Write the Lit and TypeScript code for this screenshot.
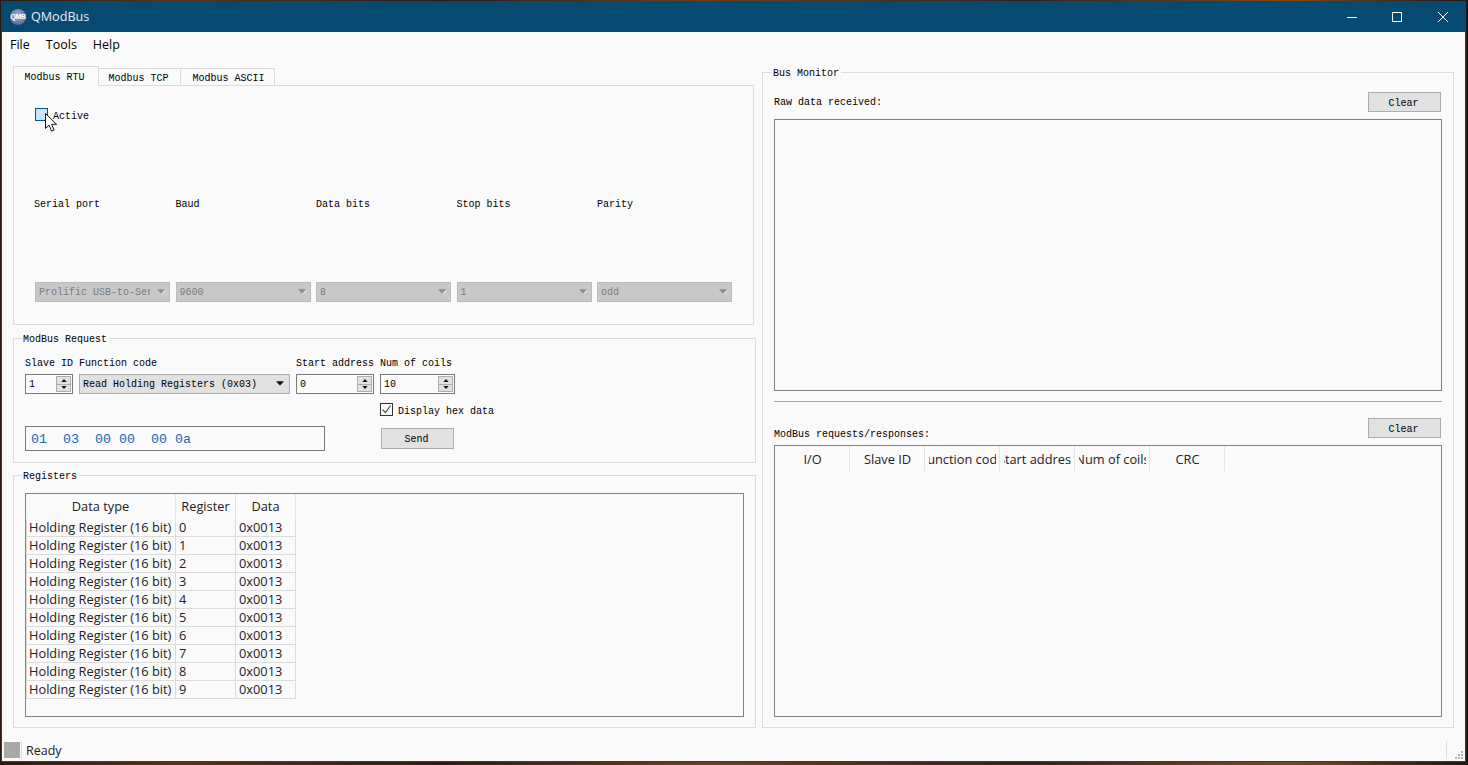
import { LitElement, html, svg, css } from "lit";
import { customElement } from "lit/decorators.js";

const arrow = (disabled: boolean) => html`<svg class="arrow" width="8" height="6" viewBox="0 0 9 6">
  ${disabled
    ? svg`<path d="M0 0h9L4.5 5z" fill="#8f8f8f"></path><path d="M4.5 5.6L9 1v1.4L4.5 6z" fill="#f4f4f4"></path>`
    : svg`<path d="M0 0h9L4.5 5z" fill="#111"></path>`}
</svg>`;

const spin = (value: string, width: number) => html`<div class="spin" style="width:${width}px">
  <span class="val">${value}</span>
  <div class="btns">
    <div class="sb"><svg width="6" height="3" viewBox="0 0 7 4"><path d="M3.5 0L7 4H0z" fill="#111"></path></svg></div>
    <div class="sb"><svg width="6" height="3" viewBox="0 0 7 4"><path d="M0 0h7L3.5 4z" fill="#111"></path></svg></div>
  </div>
</div>`;

@customElement("app-root")
export class AppRoot extends LitElement {
  static styles = css`
    :host {
      display: block;
      position: relative;
      width: 1468px;
      height: 765px;
      overflow: hidden;
      box-sizing: border-box;
      padding: 1px 2px 3px 1px;
      background: linear-gradient(90deg, #2a1a10, #5a3413 12%, #2b1d16 30%, #6b4016 48%, #33221a 70%, #7a4a18 88%, #1e1712);
      font-family: "Liberation Mono", monospace;
      font-size: 10px;
      color: #000;
    }
    * { box-sizing: border-box; }
    .window {
      height: 761px;
      display: flex;
      flex-direction: column;
      background: #fafafa;
      border: 1px solid #064a72;
      border-top: none;
    }
    .title {
      height: 31px;
      margin: 0 -1px;
      flex: none;
      display: flex;
      align-items: center;
      background: #064a72;
      color: #e6edf2;
      font: 12.6px "Open Sans", sans-serif;
    }
    .logo {
      width: 16px;
      height: 16px;
      margin: 0 5px 0 9px;
      border-radius: 50%;
      background: radial-gradient(circle at 50% 40%, #a8b4d8, #3f4e86);
      color: #fff;
      font: bold 7px/16px "Liberation Sans", sans-serif;
      letter-spacing: -0.4px;
      text-align: center;
    }
    .name { flex: 1; }
    .ctl { width: 46px; height: 31px; display: flex; align-items: center; justify-content: center; margin-left: -0.4px; }
    .menu {
      height: 24px;
      flex: none;
      display: flex;
      align-items: center;
      padding-left: 8px;
      gap: 16px;
      font: 12.5px "Open Sans", sans-serif;
    }
    .main {
      flex: 1;
      min-height: 0;
      display: grid;
      grid-template-columns: 743px 692px;
      column-gap: 6px;
      padding: 10px 0 12px 11px;
    }
    .left { display: flex; flex-direction: column; min-height: 0; }
    .tabs { display: flex; align-items: flex-end; height: 19px; margin-right: 2px; }
    .tab {
      height: 17px;
      border: 1px solid #dcdcdc;
      border-left: none;
      border-bottom: none;
      line-height: 19px;
      text-align: center;
      background: #fafafa;
    }
    .tab.on {
      height: 20px;
      margin-bottom: -1px;
      border-left: 1px solid #dcdcdc;
      padding-right: 3px;
      position: relative;
      z-index: 1;
      line-height: 22px;
    }
    .tab.b { padding-right: 2px; }
    .tab.c { padding-left: 2px; }
    .pane {
      height: 240px;
      margin-right: 2px;
      padding: 22px 0 0 21px;
      border: 1px solid #dcdcdc;
    }
    .check { display: flex; align-items: center; height: 13px; gap: 5px; white-space: nowrap; }
    .check span { margin-top: 4px; line-height: 13px; }
    .box { width: 13px; height: 13px; flex: none; border: 1px solid #333; display: flex; }
    .box.hover { background: #cce4f7; border-color: #005499; }
    .cols { display: grid; grid-template-columns: repeat(5, 135px); column-gap: 5.5px; }
    .plabels { margin-top: 78px; line-height: 12px; }
    .plabels span:first-child { margin-left: -1px; }
    .combos { margin-top: 71px; }
    .combo {
      height: 20px;
      display: flex;
      align-items: center;
      padding: 0 5px 0 3px;
      background: #e1e1e1;
      border: 1px solid #adadad;
      white-space: nowrap;
    }
    .combo.off { background: #c8c8c8; border-color: #bcbcbc; color: #7c7c7c; padding-right: 4px; }
    .combo .txt { flex: 1; overflow: hidden; min-width: 0; padding-top: 1px; }
    .combo.off .txt { margin-right: 3px; padding-top: 0; padding-bottom: 0; line-height: 13px; margin-top: 1px; }
    .arrow { flex: none; margin-left: 4px; }
    .group { border: 1px solid #dcdcdc; padding: 0 11px 10px; display: flex; flex-direction: column; }
    .gt {
      width: fit-content;
      height: 13px;
      line-height: 15px;
      margin: -7px 0 0 -3px;
      padding: 0 2px 0 1px;
      background: #fafafa;
    }
    .req { height: 125px; margin-top: 13px; }
    .reqgrid {
      margin-top: 11px;
      display: grid;
      grid-template-columns: 48px 211px 78px 75px;
      column-gap: 6px;
    }
    .lab { line-height: 12px; padding-top: 2px; margin-bottom: 4px; white-space: nowrap; }
    .spin {
      height: 20px;
      display: flex;
      align-items: center;
      padding: 0 1px 0 3px;
      border: 1px solid #7a7a7a;
      background: #fafafa;
    }
    .val { flex: 1; padding-top: 1px; }
    .btns { display: flex; flex-direction: column; gap: 0; width: 15px; height: 16px; }
    .sb {
      flex: 1;
      background: #e1e1e1;
      border: 1px solid #adadad;
      display: flex;
      align-items: center;
      justify-content: center;
    }
    .sb + .sb { border-top: none; }
    .hexcheck { grid-column: 4; margin-top: 9px; }
    .hex {
      grid-column: 1 / 4;
      width: 300px;
      height: 25px;
      margin-top: 10px;
      padding: 2px 0 0 5px;
      display: flex;
      align-items: center;
      border: 1px solid #7a7a7a;
      font: 13.33px "Liberation Mono", monospace;
      color: #1565b8;
      white-space: pre;
    }
    .btn {
      width: 73px;
      height: 21px;
      padding-top: 2px;
      background: #e1e1e1;
      border: 1px solid #adadad;
      display: flex;
      align-items: center;
      justify-content: center;
    }
    .send { grid-column: 4; align-self: center; margin: 10px 0 0 1px; padding-right: 2px; }
    .regs { flex: 1; min-height: 0; margin-top: 12px; }
    .frame { flex: 1; min-height: 0; border: 1px solid #82828a; overflow: hidden; }
    .regs .frame { margin-top: 11px; }
    .table {
      display: grid;
      grid-template-columns: 150px 60px 60px;
      grid-template-rows: 25px;
      grid-auto-rows: 18px;
      width: 270px;
      font: 12.8px "Open Sans", sans-serif;
      color: #222;
    }
    .th {
      display: flex;
      align-items: center;
      justify-content: center;
      padding-bottom: 1px;
      border-right: 1px solid #e4e4e4;
      white-space: nowrap;
    }
    .td {
      display: flex;
      align-items: center;
      padding: 0 0 1px 3px;
      white-space: nowrap;
      overflow: hidden;
      border-right: 1px solid #dcdcdc;
      border-bottom: 1px solid #dcdcdc;
    }
    .td.first { border-left: 1px solid #dcdcdc; padding-left: 2px; }
    .bus { margin-top: 6px; height: 656px; }
    .bus > .gt { margin-left: -2px; }
    .row { display: flex; align-items: center; justify-content: space-between; margin-top: 13px; }
    .row span { padding-top: 1px; }
    .row .btn { height: 20px; margin-right: 1px; padding-right: 2px; }
    .raw { height: 272px; flex: none; margin-top: 7px; }
    .sep { height: 1px; flex: none; background: #a8a8a8; margin-top: 10px; }
    .row.second { margin-top: 16px; align-items: flex-start; height: 20px; }
    .row.second span { margin-top: 10px; }
    .frame.log { margin-top: 7px; }
    .head { display: flex; height: 25px; font: 12.8px "Open Sans", sans-serif; color: #222; }
    .hc {
      width: 75px;
      flex: none;
      padding: 0 3px 0 4px;
      border-right: 1px solid #e4e4e4;
      display: flex;
    }
    .hc div {
      flex: 1;
      min-width: 0;
      overflow: hidden;
      display: flex;
      align-items: center;
      justify-content: center;
      white-space: nowrap;
    }
    .status {
      flex: none;
      height: 22px;
      display: flex;
      align-items: center;
      font: 12.5px "Open Sans", sans-serif;
      color: #222;
    }
    .lamp { width: 16px; height: 16px; margin-left: 2px; background: #a9a9a9; }
    .vsep { width: 1px; height: 18px; background: #dcdcdc; margin: 0 4px 0 1px; }
    .grow { flex: 1; }
    .rsep { width: 1px; height: 18px; background: #dcdcdc; }
    .grip { width: 18px; height: 19px; display: flex; align-items: flex-end; }
    .cursor { position: absolute; left: 45px; top: 113px; }
  `;

  render() {
    const rows = Array.from({ length: 10 }, (_, i) => i);
    const heads = ["I/O", "Slave ID", "Function code", "Start address", "Num of coils", "CRC"];
    return html`
      <div class="window">
        <div class="title">
          <div class="logo">QMB</div>
          <span class="name">QModBus</span>
          <div class="ctl"><svg width="10" height="10" viewBox="0 0 10 10"><path d="M0 5.5h10" stroke="#fff"></path></svg></div>
          <div class="ctl"><svg width="10" height="10" viewBox="0 0 10 10"><path d="M.5.5h9v9h-9z" fill="none" stroke="#fff"></path></svg></div>
          <div class="ctl"><svg width="10" height="10" viewBox="0 0 10 10"><path d="M0 0l10 10M10 0L0 10" stroke="#fff"></path></svg></div>
        </div>
        <div class="menu"><span>File</span><span>Tools</span><span>Help</span></div>
        <div class="main">
          <div class="left">
            <div class="tabs">
              <div class="tab on" style="width:86px">Modbus RTU</div>
              <div class="tab b" style="width:82px">Modbus TCP</div>
              <div class="tab c" style="width:94px">Modbus ASCII</div>
            </div>
            <div class="pane">
              <div class="check"><div class="box hover"></div><span>Active</span></div>
              <div class="cols plabels">
                <span>Serial port</span><span>Baud</span><span>Data bits</span><span>Stop bits</span><span>Parity</span>
              </div>
              <div class="cols combos">
                ${["Prolific USB-to-Serial", "9600", "8", "1", "odd"].map(
                  (t) => html`<div class="combo off"><span class="txt">${t}</span>${arrow(true)}</div>`
                )}
              </div>
            </div>
            <div class="group req">
              <div class="gt">ModBus Request</div>
              <div class="reqgrid">
                <span class="lab">Slave ID</span>
                <span class="lab">Function code</span>
                <span class="lab">Start address</span>
                <span class="lab">Num of coils</span>
                ${spin("1", 48)}
                <div class="combo"><span class="txt">Read Holding Registers (0x03)</span>${arrow(false)}</div>
                ${spin("0", 78)}
                ${spin("10", 75)}
                <div class="check hexcheck">
                  <div class="box">
                    <svg width="11" height="11" viewBox="0 0 11 11"><path d="M1.5 5.5l3 3 5-7" fill="none" stroke="#555" stroke-width="1.2"></path></svg>
                  </div>
                  <span>Display hex data</span>
                </div>
                <div class="hex">01  03  00 00  00 0a</div>
                <div class="btn send">Send</div>
              </div>
            </div>
            <div class="group regs">
              <div class="gt">Registers</div>
              <div class="frame">
                <div class="table">
                  <div class="th">Data type</div><div class="th">Register</div><div class="th">Data</div>
                  ${rows.map(
                    (i) => html`
                      <div class="td first">Holding Register (16 bit)</div>
                      <div class="td">${i}</div>
                      <div class="td">0x0013</div>
                    `
                  )}
                </div>
              </div>
            </div>
          </div>
          <div class="group bus">
            <div class="gt">Bus Monitor</div>
            <div class="row"><span>Raw data received:</span><div class="btn">Clear</div></div>
            <div class="frame raw"></div>
            <div class="sep"></div>
            <div class="row second"><span>ModBus requests/responses:</span><div class="btn">Clear</div></div>
            <div class="frame log">
              <div class="head">${heads.map((h) => html`<div class="hc"><div>${h}</div></div>`)}</div>
            </div>
          </div>
        </div>
        <div class="status">
          <div class="lamp"></div><div class="vsep"></div><span>Ready</span>
          <span class="grow"></span>
          <div class="rsep"></div>
          <div class="grip">
            <svg width="18" height="10" viewBox="0 0 18 10">
              <path d="M6 0h2v2H6zM3 3h2v2H3zM6 3h2v2H6zM0 6h2v2H0zM3 6h2v2H3zM6 6h2v2H6z" fill="#b4b4b4" transform="translate(8 1)"></path>
            </svg>
          </div>
        </div>
      </div>
      <svg class="cursor" width="13" height="20" viewBox="0 0 13 20">
        <path d="M.5.5v15l3.6-3.4 2.4 6 2.6-1-2.5-5.8h5z" fill="#fff" stroke="#111"></path>
      </svg>
    `;
  }
}
